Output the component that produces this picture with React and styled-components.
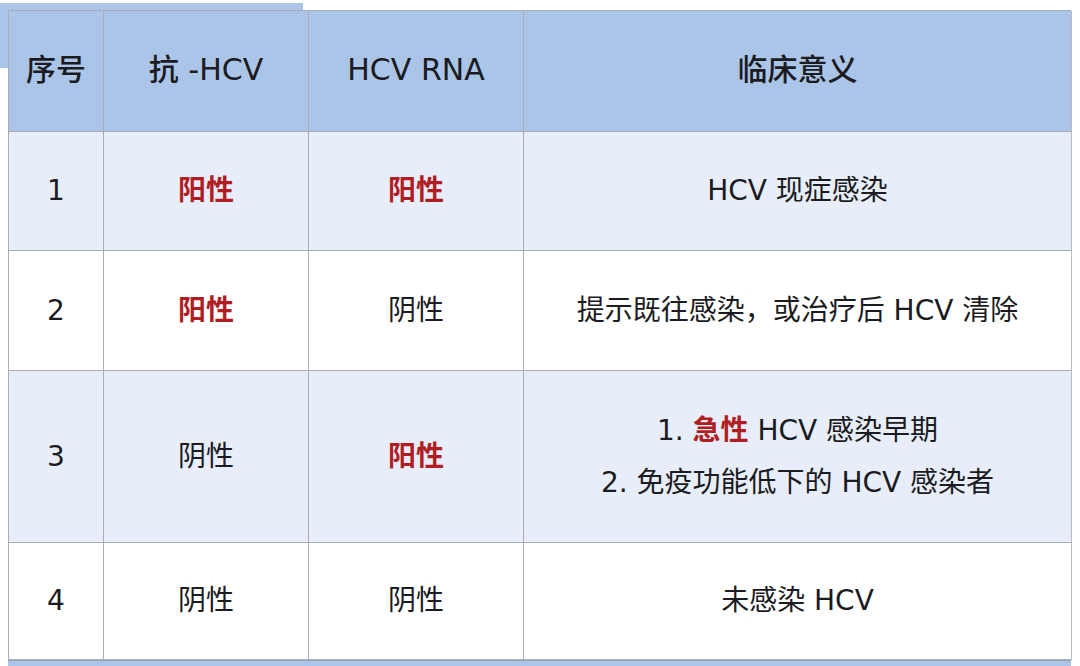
import React from "react";
import styled, { createGlobalStyle } from "styled-components";

const Global = createGlobalStyle`
  html, body { margin: 0; padding: 0; background: #ffffff; }
  body { width: 1080px; height: 666px; overflow: hidden; }
`;

const Page = styled.div`
  position: relative;
  width: 1080px;
  height: 666px;
  padding: 10px 0 0 8px;
  box-sizing: border-box;
  font-family: "DejaVu Sans", "Noto Sans CJK SC", sans-serif;
  color: #1b1b22;
`;

const CornerPatch = styled.div`
  position: absolute;
  left: 0;
  top: 3px;
  width: 303px;
  height: 7px;
  background: #abc5e8;
  &::after {
    content: "";
    position: absolute;
    left: 0;
    top: 7px;
    width: 8px;
    height: 58px;
    background: #abc5e8;
  }
`;

const Table = styled.div`
  position: relative;
  width: 1063px;
  display: grid;
  grid-template-columns: 95px 205px 215px 548px;
  grid-template-rows: 121px 119px 120px 172px 117px;
  border-left: 1px solid #a9adb5;
  border-top: 1px solid #a9adb5;
  box-sizing: border-box;
`;

const Cell = styled.div`
  display: flex;
  flex-direction: column;
  align-items: center;
  justify-content: center;
  box-sizing: border-box;
  border-right: 1px solid ${(p) => (p.$last ? "#b9bcc2" : "#a9adb5")};
  border-bottom: 1px solid #a9adb5;
  background: ${(p) => (p.$tone === "head" ? "#abc5e8" : p.$tone === "tint" ? "#e7eef9" : "#ffffff")};
  font-size: ${(p) => (p.$tone === "head" ? "30px" : "28px")};
  font-weight: ${(p) => (p.$tone === "head" ? 500 : 400)};
  line-height: 52px;
  padding-bottom: ${(p) => (p.$tone === "head" ? "2px" : "0")};
  white-space: pre;
`;

const Positive = styled.span`
  color: #b01e24;
  font-weight: 700;
`;

const Line = styled.div`
  line-height: 52px;
`;

const Footer = styled.div`
  width: 1063px;
  height: 7px;
  background: #abc5e8;
  border-top: 1px solid #9aa3b0;
`;

const rows = [
  { no: "1", a: <Positive>阳性</Positive>, b: <Positive>阳性</Positive>, m: <Line>HCV 现症感染</Line>, tone: "tint" },
  { no: "2", a: <Positive>阳性</Positive>, b: "阴性", m: <Line>提示既往感染，或治疗后 HCV 清除</Line>, tone: "plain" },
  {
    no: "3",
    a: "阴性",
    b: <Positive>阳性</Positive>,
    m: (
      <>
        <Line>1. <Positive>急性</Positive> HCV 感染早期</Line>
        <Line>2. 免疫功能低下的 HCV 感染者</Line>
      </>
    ),
    tone: "tint",
  },
  { no: "4", a: "阴性", b: "阴性", m: <Line>未感染 HCV</Line>, tone: "plain" },
];

export default function App() {
  return (
    <>
      <Global />
      <Page>
        <CornerPatch />
        <Table>
          <Cell $tone="head">序号</Cell>
          <Cell $tone="head">抗 -HCV</Cell>
          <Cell $tone="head">HCV RNA</Cell>
          <Cell $tone="head" $last>临床意义</Cell>
          {rows.map((r) => (
            <React.Fragment key={r.no}>
              <Cell $tone={r.tone}>{r.no}</Cell>
              <Cell $tone={r.tone}>{r.a}</Cell>
              <Cell $tone={r.tone}>{r.b}</Cell>
              <Cell $tone={r.tone} $last>{r.m}</Cell>
            </React.Fragment>
          ))}
        </Table>
        <Footer />
      </Page>
    </>
  );
}
